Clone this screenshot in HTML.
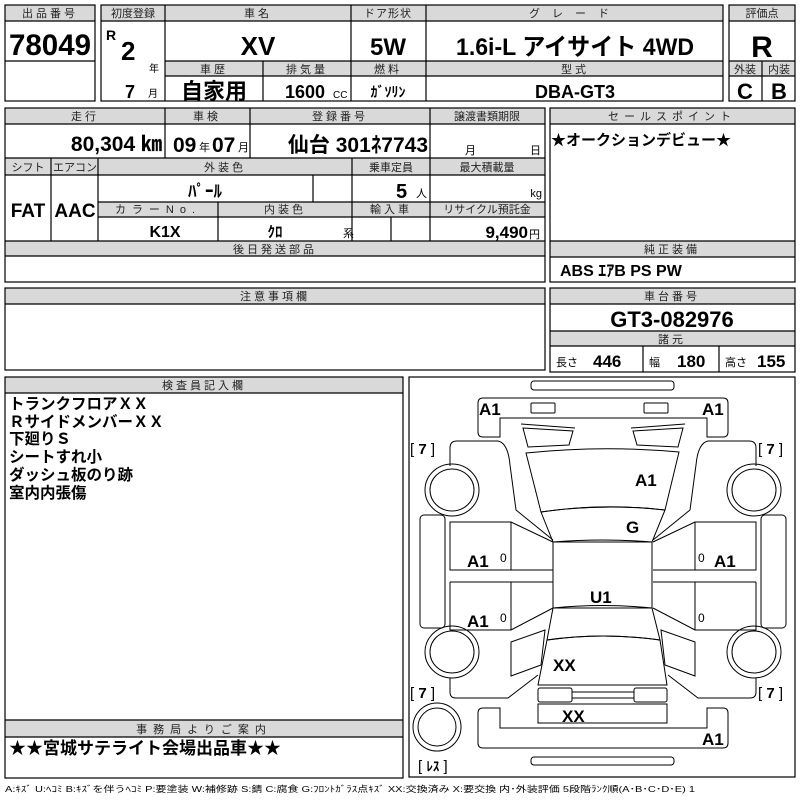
<!DOCTYPE html>
<html><head><meta charset="utf-8"><style>
html,body{margin:0;padding:0;background:#fff;}
svg{display:block;}
text{font-family:"Liberation Sans","Noto Sans CJK JP",sans-serif;fill:#000;}
.h{font-size:11px;letter-spacing:3px;text-anchor:middle;fill:#222;}
.b{font-weight:bold;}
.m{text-anchor:middle;}
.e{text-anchor:end;}
</style></head><body>
<svg width="800" height="800" viewBox="0 0 800 800" xmlns="http://www.w3.org/2000/svg">
<g fill="#d9d9d9" stroke="none">
<rect x="5" y="5" width="90" height="16"/>
<rect x="101" y="5" width="622" height="16"/>
<rect x="165" y="61" width="558" height="15"/>
<rect x="729" y="5" width="66" height="16"/>
<rect x="729" y="61" width="66" height="15"/>
<rect x="5" y="108" width="540" height="16"/>
<rect x="5" y="158" width="540" height="17"/>
<rect x="98" y="202" width="447" height="15"/>
<rect x="5" y="241" width="540" height="15"/>
<rect x="550" y="108" width="245" height="16"/>
<rect x="550" y="241" width="245" height="16"/>
<rect x="5" y="288" width="540" height="16"/>
<rect x="550" y="288" width="245" height="16"/>
<rect x="550" y="331" width="245" height="15"/>
<rect x="5" y="377" width="398" height="16"/>
<rect x="5" y="720" width="398" height="17"/>
</g>
<g fill="none" stroke="#000" stroke-width="1.2">
<rect x="5" y="5" width="90" height="96"/>
<line x1="5" y1="21" x2="95" y2="21"/><line x1="5" y1="61" x2="95" y2="61"/>
<rect x="101" y="5" width="622" height="96"/>
<line x1="101" y1="21" x2="723" y2="21"/>
<line x1="165" y1="61" x2="723" y2="61"/><line x1="165" y1="76" x2="723" y2="76"/>
<line x1="165" y1="5" x2="165" y2="101"/><line x1="351" y1="5" x2="351" y2="101"/><line x1="426" y1="5" x2="426" y2="101"/>
<line x1="263" y1="61" x2="263" y2="101"/>
<rect x="729" y="5" width="66" height="96"/>
<line x1="729" y1="21" x2="795" y2="21"/><line x1="729" y1="61" x2="795" y2="61"/><line x1="729" y1="76" x2="795" y2="76"/>
<line x1="762" y1="61" x2="762" y2="101"/>

<rect x="5" y="108" width="540" height="174"/>
<line x1="5" y1="124" x2="545" y2="124"/><line x1="5" y1="158" x2="545" y2="158"/><line x1="5" y1="175" x2="545" y2="175"/>
<line x1="98" y1="202" x2="545" y2="202"/><line x1="98" y1="217" x2="545" y2="217"/>
<line x1="5" y1="241" x2="545" y2="241"/><line x1="5" y1="256" x2="545" y2="256"/>
<line x1="165" y1="108" x2="165" y2="158"/><line x1="250" y1="108" x2="250" y2="158"/><line x1="430" y1="108" x2="430" y2="241"/>
<line x1="51" y1="158" x2="51" y2="241"/><line x1="98" y1="158" x2="98" y2="241"/><line x1="352" y1="158" x2="352" y2="241"/>
<line x1="313" y1="175" x2="313" y2="202"/><line x1="218" y1="202" x2="218" y2="241"/><line x1="391" y1="217" x2="391" y2="241"/>

<rect x="550" y="108" width="245" height="174"/>
<line x1="550" y1="124" x2="795" y2="124"/><line x1="550" y1="241" x2="795" y2="241"/><line x1="550" y1="257" x2="795" y2="257"/>

<rect x="5" y="288" width="540" height="82"/><line x1="5" y1="304" x2="545" y2="304"/>
<rect x="550" y="288" width="245" height="84"/>
<line x1="550" y1="304" x2="795" y2="304"/><line x1="550" y1="331" x2="795" y2="331"/><line x1="550" y1="346" x2="795" y2="346"/>
<line x1="643" y1="346" x2="643" y2="372"/><line x1="719" y1="346" x2="719" y2="372"/>

<rect x="5" y="377" width="398" height="401"/>
<line x1="5" y1="393" x2="403" y2="393"/><line x1="5" y1="720" x2="403" y2="720"/><line x1="5" y1="737" x2="403" y2="737"/>
<rect x="409" y="377" width="386" height="400"/>
</g>

<!-- texts row1 -->
<text class="h" x="50" y="17">出品番号</text>
<text class="b m" x="50" y="55" font-size="30" textLength="82" lengthAdjust="spacingAndGlyphs">78049</text>
<text class="h" x="133" y="17" style="letter-spacing:0">初度登録</text>
<text class="b" x="106" y="40" font-size="14">R</text>
<text class="b" x="121" y="60" font-size="26">2</text>
<text x="149" y="72" font-size="10">年</text>
<text class="b" x="125" y="98" font-size="18">7</text>
<text x="148" y="97" font-size="10">月</text>
<text class="h" x="258" y="17">車名</text>
<text class="b m" x="258" y="55" font-size="26">XV</text>
<text class="h" x="388" y="17" style="letter-spacing:1px">ドア形状</text>
<text class="b m" x="388" y="55" font-size="24">5W</text>
<text class="h" x="575" y="17" style="letter-spacing:12px">グレード</text>
<text class="b m" x="575" y="55" font-size="24" textLength="238" lengthAdjust="spacingAndGlyphs">1.6i-L アイサイト 4WD</text>
<text class="h" x="762" y="17" style="letter-spacing:0">評価点</text>
<text class="b m" x="762" y="57" font-size="30">R</text>
<text class="h" x="214" y="73">車歴</text>
<text class="h" x="307" y="73">排気量</text>
<text class="h" x="388" y="73">燃料</text>
<text class="h" x="575" y="73">型式</text>
<text class="h" x="745" y="73" style="letter-spacing:0">外装</text>
<text class="h" x="779" y="73" style="letter-spacing:0">内装</text>
<text class="b m" x="214" y="99" font-size="22">自家用</text>
<text class="b" x="285" y="98" font-size="18">1600</text>
<text x="333" y="98" font-size="10">CC</text>
<text class="b m" x="388" y="97" font-size="14">ｶﾞｿﾘﾝ</text>
<text class="b m" x="575" y="98" font-size="18">DBA-GT3</text>
<text class="b m" x="745" y="99" font-size="22">C</text>
<text class="b m" x="779" y="99" font-size="22">B</text>

<!-- row2 -->
<text class="h" x="85" y="120">走行</text>
<text class="h" x="207" y="120">車検</text>
<text class="h" x="340" y="120">登録番号</text>
<text class="h" x="487" y="120" style="letter-spacing:0">譲渡書類期限</text>
<text class="b e" x="162" y="151" font-size="21">80,304 ㎞</text>
<text class="b" x="173" y="152" font-size="21">09</text><text x="199" y="151" font-size="11">年</text>
<text class="b" x="212" y="152" font-size="21">07</text><text x="238" y="151" font-size="11">月</text>
<text class="b e" x="428" y="152" font-size="21">仙台 301ﾈ7743</text>
<text x="465" y="154" font-size="11">月</text><text x="530" y="154" font-size="11">日</text>
<text class="h" x="28" y="171" style="letter-spacing:0">シフト</text>
<text class="h" x="75" y="171" style="letter-spacing:0">エアコン</text>
<text class="h" x="225" y="171">外装色</text>
<text class="h" x="391" y="171" style="letter-spacing:0">乗車定員</text>
<text class="h" x="487" y="171" style="letter-spacing:0">最大積載量</text>
<text class="b m" x="28" y="217" font-size="19">FAT</text>
<text class="b m" x="75" y="217" font-size="19">AAC</text>
<text class="b m" x="205" y="197" font-size="17">ﾊﾟｰﾙ</text>
<text class="b" x="396" y="198" font-size="20">5</text>
<text x="416" y="197" font-size="11">人</text>
<text class="e" x="542" y="197" font-size="11">kg</text>
<text class="h" x="158" y="213" style="letter-spacing:6px">カラーNo.</text>
<text class="h" x="285" y="213">内装色</text>
<text class="h" x="391" y="213">輸入車</text>
<text class="h" x="487" y="213" style="letter-spacing:0">リサイクル預託金</text>
<text class="b m" x="165" y="237" font-size="16">K1X</text>
<text class="b m" x="275" y="237" font-size="15">ｸﾛ</text>
<text x="343" y="237" font-size="11">系</text>
<text class="b e" x="528" y="238" font-size="17">9,490</text><text x="529" y="238" font-size="11">円</text>
<text class="h" x="275" y="253">後日発送部品</text>

<text class="h" x="672" y="120" style="letter-spacing:5px">セールスポイント</text>
<text class="b" x="551" y="145" font-size="15">★オークションデビュー★</text>
<text class="h" x="672" y="253">純正装備</text>
<text class="b" x="560" y="276" font-size="16">ABS ｴｱB PS PW</text>
<text class="h" x="275" y="300">注意事項欄</text>
<text class="h" x="672" y="300">車台番号</text>
<text class="b m" x="672" y="327" font-size="22">GT3-082976</text>
<text class="h" x="672" y="343">諸元</text>
<text x="556" y="366" font-size="11">長さ</text><text class="b" x="593" y="367" font-size="17">446</text>
<text x="649" y="366" font-size="11">幅</text><text class="b" x="677" y="367" font-size="17">180</text>
<text x="725" y="366" font-size="11">高さ</text><text class="b" x="757" y="367" font-size="17">155</text>

<text class="h" x="204" y="389">検査員記入欄</text>
<g class="b" font-size="15.5" font-weight="bold">
<text x="9" y="409">トランクフロアＸＸ</text>
<text x="9" y="427">ＲサイドメンバーＸＸ</text>
<text x="9" y="444">下廻りＳ</text>
<text x="9" y="462">シートすれ小</text>
<text x="9" y="480">ダッシュ板のり跡</text>
<text x="9" y="498">室内内張傷</text>
</g>
<text class="h" x="204" y="733" style="letter-spacing:6px">事務局よりご案内</text>
<text class="b" x="9" y="754" font-size="17">★★宮城サテライト会場出品車★★</text>
<text x="5" y="792" font-size="8.5" textLength="690" lengthAdjust="spacingAndGlyphs">A:ｷｽﾞ U:ﾍｺﾐ B:ｷｽﾞを伴うﾍｺﾐ P:要塗装 W:補修跡 S:錆 C:腐食 G:ﾌﾛﾝﾄｶﾞﾗｽ点ｷｽﾞ XX:交換済み X:要交換 内･外装評価 5段階ﾗﾝｸ順(A･B･C･D･E) 1</text>

<!-- diagram -->
<g fill="none" stroke="#000" stroke-width="1">
<rect x="531" y="381" width="143" height="9" rx="3"/>
<path d="M478,403 Q478,398 483,398 H723 Q728,398 728,403 V432 Q728,437 723,437 H707 V418 H500 V437 H483 Q478,437 478,432 Z"/>
<rect x="531" y="403" width="24" height="10" rx="1"/>
<rect x="644" y="403" width="24" height="10" rx="1"/>
<path d="M712,708 H723 Q728,708 728,713 V743 Q728,748 723,748 H483 Q478,748 478,743 V713 Q478,708 483,708 H500 V728 H707 V708 Z"/>
<rect x="531" y="757" width="143" height="8" rx="3"/>
<path d="M526,453 Q603,445 679,452 L665,510 Q603,503 541,512 Z"/>
<path d="M541,512 Q603,503 665,510 L652,542 Q603,538 553,542 Z"/>
<rect x="553" y="542" width="99" height="66"/>
<path d="M553,608 Q603,603 652,608 L660,640 Q603,632 547,640 Z"/>
<path d="M547,640 Q603,632 660,640 L667,685 H538 Z"/>
<rect x="538" y="688" width="34" height="14" rx="2"/>
<rect x="634" y="688" width="33" height="14" rx="2"/>
<line x1="572" y1="692" x2="634" y2="692"/><line x1="572" y1="698" x2="634" y2="698"/>
<rect x="538" y="704" width="129" height="19"/>
<ellipse cx="437" cy="727" rx="24" ry="24"/><ellipse cx="437" cy="727" rx="19" ry="19"/>
</g>
<g id="side" fill="none" stroke="#000" stroke-width="1">
<path d="M521,424 L575,428 M523,428 L573,431 L569,445 L528,447 Z"/>
<path d="M450,466 V448 Q450,441 457,441 H498 Q508,443 510,465 L516,510 L553,540"/>
<ellipse cx="452" cy="490" rx="27" ry="26"/><ellipse cx="452" cy="490" rx="22" ry="21"/>
<rect x="420" y="515" width="25" height="113" rx="4"/>
<path d="M553,542 L511,522 H450 V570 H553"/>
<line x1="511" y1="522" x2="511" y2="570"/>
<path d="M450,582 H553 M553,608 L511,630 H450 V582"/>
<line x1="511" y1="582" x2="511" y2="630"/>
<ellipse cx="452" cy="652" rx="27" ry="26"/><ellipse cx="452" cy="652" rx="22" ry="21"/>
<path d="M511,642 L545,630 L541,665 L511,676 Z"/>
<path d="M450,678 V692 Q450,698 456,698 H508 L538,675"/>
</g>
<use href="#side" transform="translate(1206,0) scale(-1,1)"/>
<g class="b" font-size="17" font-weight="bold">
<text x="479" y="415">A1</text><text x="702" y="415">A1</text>
<text x="635" y="486">A1</text><text x="626" y="533">G</text>
<text x="467" y="567">A1</text><text x="714" y="567">A1</text>
<text x="590" y="603">U1</text>
<text x="467" y="627">A1</text>
<text x="553" y="671">XX</text><text x="562" y="722">XX</text>
<text x="702" y="745">A1</text>
</g>
<g font-size="12">
<text x="500" y="562">0</text><text x="698" y="562">0</text>
<text x="500" y="622">0</text><text x="698" y="622">0</text>
</g>
<g font-size="15">
<text x="410" y="454">[ <tspan font-weight="bold">7</tspan> ]</text>
<text x="758" y="454">[ <tspan font-weight="bold">7</tspan> ]</text>
<text x="410" y="698">[ <tspan font-weight="bold">7</tspan> ]</text>
<text x="758" y="698">[ <tspan font-weight="bold">7</tspan> ]</text>
<text x="418" y="771">[ <tspan font-weight="bold" font-size="13">ﾚｽ</tspan> ]</text>
</g>
</svg>
</body></html>
